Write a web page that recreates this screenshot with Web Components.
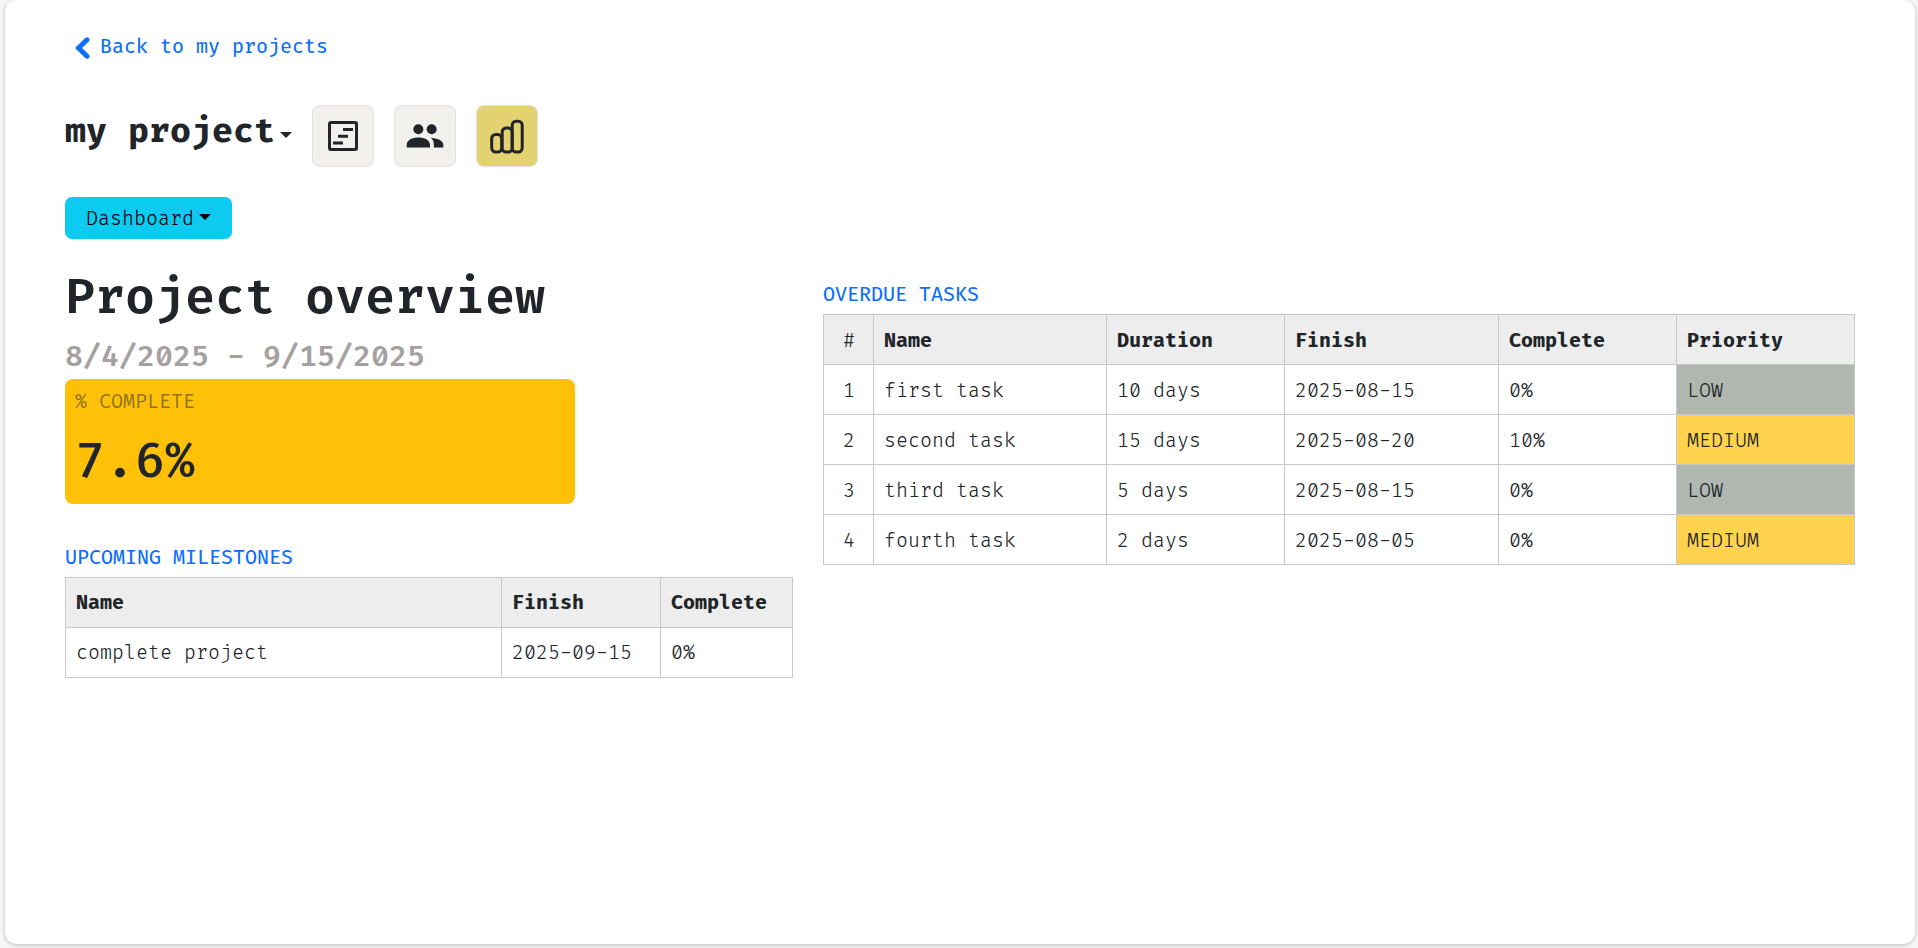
<!DOCTYPE html>
<html lang="en">
<head>
<meta charset="utf-8">
<title>Project overview</title>
<style>
  html, body { margin: 0; height: 100%; overflow: hidden; background: #f6f6f6; }
  body { font-family: "Fira Code", "DejaVu Sans Mono", monospace; font-size: 19.5px; font-weight: 350; line-height: 30px; color: #212529; font-variant-ligatures: none; }
</style>
</head>
<body>
<project-page></project-page>
<script>
class Base extends HTMLElement {
  constructor() {
    super();
    this.attachShadow({ mode: 'open' }).innerHTML = this.template();
  }
}

customElements.define('drop-caret', class extends Base {
  template() {
    return `<style>
      :host { display: block; width: 0; height: 0; border: 6px solid transparent; border-top-color: currentColor; border-bottom: 0; }
    </style>`;
  }
});

customElements.define('back-link', class extends Base {
  template() {
    return `<style>
      :host { display: flex; align-items: center; height: 30px; padding-left: 10px; color: #0d6efd; font-weight: 450; }
      svg { width: 15px; height: 22px; margin: 3px 10px 0 0; }
      span { padding-top: 2px; }
    </style>
    <svg viewBox="0 0 15 22"><path d="M12 2.8 3.6 11l8.4 8.2" fill="none" stroke="currentColor" stroke-width="5" stroke-linecap="round"/></svg>
    <span><slot></slot></span>`;
  }
});

customElements.define('icon-button', class extends Base {
  template() {
    return `<style>
      :host { display: grid; place-items: center; box-sizing: border-box; width: 62px; height: 62px; border: 1px solid #dee2e6; border-radius: 8px; background: #f1f0ec; }
      :host([active]) { background: #e4d16f; }
      ::slotted(svg) { width: 40px; height: 40px; display: block; }
    </style><slot></slot>`;
  }
});

customElements.define('project-bar', class extends Base {
  template() {
    return `<style>
      :host { display: flex; height: 62px; }
      h2 { margin: 8px 5px 0 0; width: 210px; font-size: 34.125px; line-height: 38px; font-weight: 700; white-space: nowrap; }
      drop-caret { margin: 27px 20px 0 0; }
      nav { display: flex; gap: 20px; }
    </style>
    <h2>my project</h2><drop-caret></drop-caret>
    <nav>
      <icon-button><svg viewBox="0 0 40 40" fill="#212529"><rect x="6.5" y="6.5" width="27" height="27" rx="1.5" fill="none" stroke="#212529" stroke-width="3"/><path d="M20 12h10v3H20zM15 18.7h10v3H15zM10 25.4h10v3H10z"/></svg></icon-button>
      <icon-button><svg viewBox="1 .1 24 24" fill="#212529"><circle cx="9" cy="8" r="3"/><circle cx="17" cy="8" r="3"/><path d="M2 19v-1.6C2 14.5 5.4 13 9 13s7 1.5 7 4.4V19zM16.4 13.1c3.7.2 7.6 1.6 7.6 4.3V19h-5.7v-2c0-1.6-.7-3-1.9-3.9z"/></svg></icon-button>
      <icon-button active><svg viewBox="0 0 40 40" fill="none" stroke="#212529" stroke-width="3"><rect x="4.7" y="18.5" width="10" height="17.5" rx="4"/><rect x="15.2" y="12" width="10" height="24" rx="4"/><rect x="25.2" y="5.2" width="10" height="30.8" rx="4"/></svg></icon-button>
    </nav>`;
  }
});

customElements.define('view-menu', class extends Base {
  template() {
    return `<style>
      :host { display: flex; box-sizing: border-box; width: 167px; height: 42px; padding-left: 21px; border-radius: 7px; background: #0dcaf0; color: #000; line-height: 42px; }
      span { width: 108px; margin: 1px 5px 0 0; }
      drop-caret { margin-top: 17px; }
    </style><span><slot></slot></span><drop-caret></drop-caret>`;
  }
});

customElements.define('complete-card', class extends Base {
  template() {
    return `<style>
      :host { display: block; box-sizing: border-box; width: 510px; height: 125px; margin-top: 4px; padding: 8px 10px 0; border-radius: 8px; background: #ffc107; }
      small { display: block; font-size: inherit; font-weight: 400; color: rgba(33,37,41,.5); }
      b { display: block; margin-top: 16px; font-size: 48.75px; line-height: 58px; font-weight: 500; }
    </style><small>% COMPLETE</small><b><slot></slot></b>`;
  }
});

customElements.define('data-table', class extends Base {
  template() {
    return `<style>
      :host { display: block; }
      h3 { box-sizing: border-box; margin: 0 0 5px; padding-top: 1px; font: inherit; font-weight: 450; height: 30px; color: #0d6efd; }
      table { border-collapse: collapse; table-layout: fixed; width: 100%; }
      th, td { box-sizing: border-box; height: 50px; padding: var(--cell-top, 2px) 0 0 10px; border: 1px solid #c8c8c8; text-align: left; white-space: nowrap; line-height: 30px; }
      th { background: #ededed; font-weight: 700; }
      .n { text-align: center; padding-left: 1px; font-weight: 350; }
      .low { background: #b0b7b0; }
      .medium { background: #ffd34e; }
    </style><h3></h3><table><colgroup></colgroup><thead></thead><tbody></tbody></table>`;
  }
  connectedCallback() {
    const $ = s => this.shadowRoot.querySelector(s);
    const lines = this.getAttribute('rows').split(';').map(r => r.split('|'));
    $('h3').textContent = this.getAttribute('heading');
    $('colgroup').innerHTML = this.getAttribute('cols').split(' ').map(w => `<col style="width:${w}px">`).join('');
    const numbered = lines[0][0] === '#';
    const row = (cells, tag) => '<tr>' + cells.map((c, i) => {
      const cls = numbered && i === 0 ? 'n' : /^(LOW|MEDIUM)$/.test(c) ? c.toLowerCase() : '';
      return `<${tag} class="${cls}">${c}</${tag}>`;
    }).join('') + '</tr>';
    $('thead').innerHTML = row(lines[0], 'th');
    $('tbody').innerHTML = lines.slice(1).map(r => row(r, 'td')).join('');
  }
});

customElements.define('project-page', class extends Base {
  template() {
    return `<style>
      :host { display: block; box-sizing: border-box; height: 944px; margin: 0 3px 0 5px; padding: 31px 60px 0; border-radius: 12px; background: #fff; box-shadow: 0 1px 4px rgba(0,0,0,.24); }
      project-bar { margin-top: 44px; }
      view-menu { margin-top: 30px; }
      main { display: grid; grid-template-columns: 728px 1032px; column-gap: 30px; align-items: start; }
      h1 { margin: 30px 0 0; font-size: 48.75px; line-height: 58px; font-weight: 600; }
      h4 { margin: 12px 0 0; font-size: 29.25px; line-height: 36px; font-weight: 600; color: #a5a1a1; }
      .milestones { margin-top: 38px; width: 727.5px; --cell-top: 0px; }
      .overdue { margin-top: 40px; }
    </style>
    <back-link>Back to my projects</back-link>
    <project-bar></project-bar>
    <view-menu>Dashboard</view-menu>
    <main>
      <section>
        <h1>Project overview</h1>
        <h4>8/4/2025 - 9/15/2025</h4>
        <complete-card>7.6%</complete-card>
        <data-table class="milestones" heading="UPCOMING MILESTONES" cols="436 159 132"
          rows="Name|Finish|Complete;complete project|2025-09-15|0%"></data-table>
      </section>
      <data-table class="overdue" heading="OVERDUE TASKS" cols="50 233 178 214 178 178"
        rows="#|Name|Duration|Finish|Complete|Priority;1|first task|10 days|2025-08-15|0%|LOW;2|second task|15 days|2025-08-20|10%|MEDIUM;3|third task|5 days|2025-08-15|0%|LOW;4|fourth task|2 days|2025-08-05|0%|MEDIUM"></data-table>
    </main>`;
  }
});
</script>
</body>
</html>
